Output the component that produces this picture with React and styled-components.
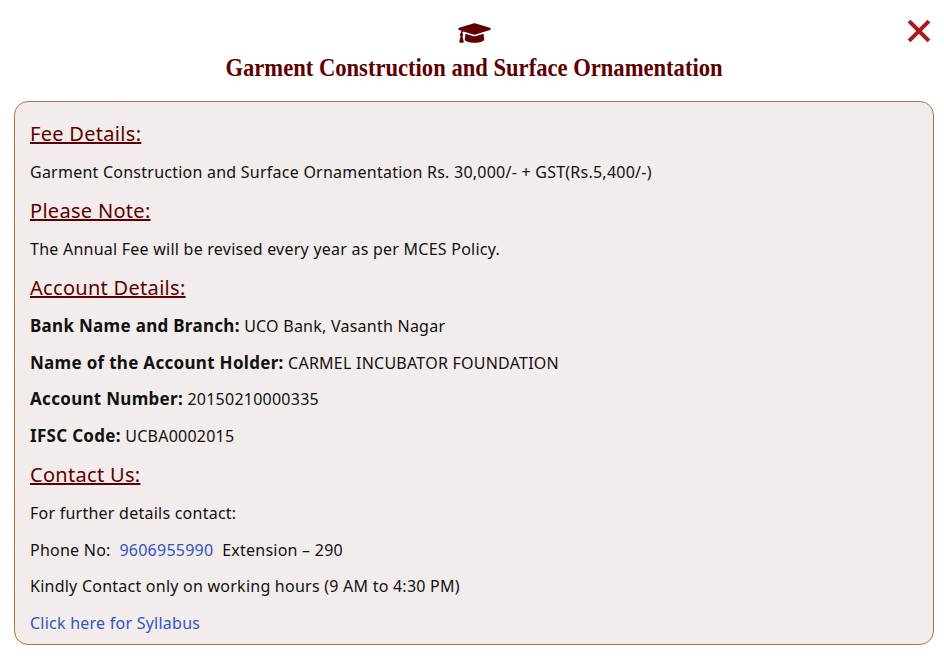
import React from 'react';
import styled, {createGlobalStyle} from 'styled-components';
import {FaGraduationCap} from 'react-icons/fa';

const GlobalStyle = createGlobalStyle`
    html, body {
        margin: 0;
        padding: 0;
        background: #fff;
    }
`;

const CloseIcon = () => (
    <svg width="24" height="24" viewBox="0 0 24 24">
        <path d="M3.5 3.5 L20.5 20.5 M20.5 3.5 L3.5 20.5" stroke="#a81c1c" strokeWidth="4" strokeLinecap="square" fill="none" />
    </svg>
);

const App = () => {
    return (
        <Page>
            <GlobalStyle />
            <Header>
                <CapIcon />
                <Title>Garment Construction and Surface Ornamentation</Title>
                <CloseButton><CloseIcon /></CloseButton>
            </Header>
            <Card>
                <Heading>Fee Details:</Heading>
                <Line>Garment Construction and Surface Ornamentation Rs. 30,000/- + GST(Rs.5,400/-)</Line>
                <Heading>Please Note:</Heading>
                <Line>The Annual Fee will be revised every year as per MCES Policy.</Line>
                <Heading>Account Details:</Heading>
                <Line><Label>Bank Name and Branch:</Label> UCO Bank, Vasanth Nagar</Line>
                <Line><Label>Name of the Account Holder:</Label> CARMEL INCUBATOR FOUNDATION</Line>
                <Line><Label>Account Number:</Label> 20150210000335</Line>
                <Line><Label>IFSC Code:</Label> UCBA0002015</Line>
                <Heading>Contact Us:</Heading>
                <Line>For further details contact:</Line>
                <Line>Phone No:&nbsp; <Link href="#">9606955990</Link>&nbsp; Extension – 290</Line>
                <Line>Kindly Contact only on working hours (9 AM to 4:30 PM)</Line>
                <Line><Link href="#">Click here for Syllabus</Link></Line>
            </Card>
        </Page>
    );
};

const Page = styled.div`
    width: 944px;
    height: 665px;
    overflow: hidden;
    padding: 0 10px 0 14px;
    box-sizing: border-box;
    font-family: "Noto Sans", sans-serif;
    color: #111;
`;

const Header = styled.header`
    position: relative;
    height: 101px;
    box-sizing: border-box;
    padding-top: 20px;
    display: flex;
    flex-direction: column;
    align-items: center;
`;

const CapIcon = styled(FaGraduationCap)`
    width: 33px;
    height: 26px;
    color: #5e0000;
`;

const Title = styled.h1`
    margin: 7px 0 0;
    font-family: "Liberation Serif", serif;
    font-size: 25px;
    line-height: 30px;
    font-weight: 700;
    color: #5e0000;
    white-space: nowrap;
    transform: scaleX(0.904);
`;

const CloseButton = styled.div`
    position: absolute;
    top: 19px;
    right: 3px;
    display: flex;
`;

const Card = styled.section`
    height: 544px;
    box-sizing: border-box;
    padding: 17.5px 15px 0;
    background: #f2ecec;
    border: 1px solid #b0733c;
    border-radius: 14px;
`;

const Heading = styled.h2`
    margin: 0 0 13px;
    font-size: 20px;
    line-height: 27.5px;
    font-weight: 400;
    letter-spacing: 0.3px;
    color: #5e0000;
    text-decoration: underline;
`;

const Line = styled.p`
    margin: 0 0 12.6px;
    font-size: 16px;
    line-height: 24px;
    letter-spacing: 0.24px;
`;

const Label = styled.strong`
    font-size: 17px;
    font-weight: 700;
    line-height: 20px;
    letter-spacing: 0.3px;
`;

const Link = styled.a`
    color: #2f55c0;
    text-decoration: none;
`;

export default App;
